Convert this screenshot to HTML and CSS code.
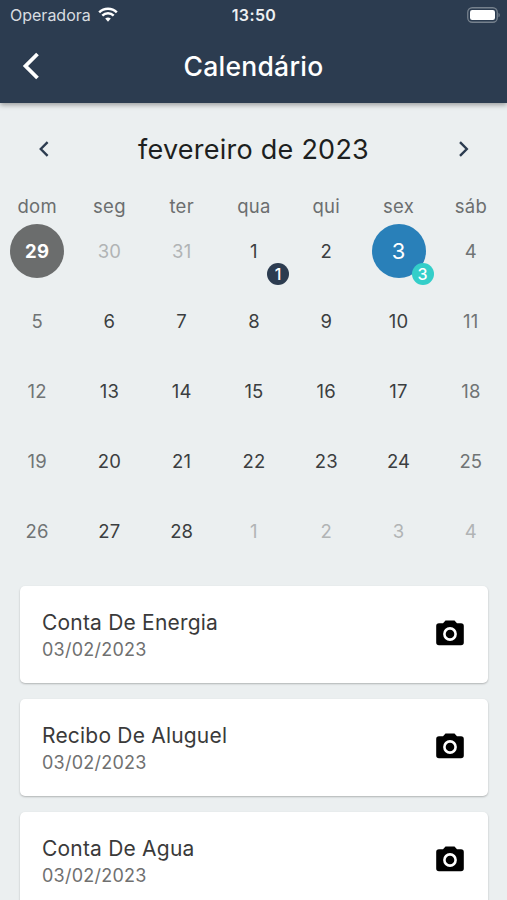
FILE: index.html
```
<!DOCTYPE html>
<html lang="pt-BR">
<head>
    <meta charset="UTF-8">
    <meta name="viewport" content="width=device-width, initial-scale=1.0">
    <title>Calendário</title>
    <link rel="stylesheet" href="styles.css">
</head>
<body>
    <header class="app-header">
        <div class="status-bar">
            <div class="carrier">
                <span>Operadora</span>
                <svg class="wifi" viewBox="0 0 20 15" width="20" height="15">
                    <path d="M1.2 5.4a12.6 12.6 0 0 1 17.6 0M4.3 8.6a8.2 8.2 0 0 1 11.4 0" fill="none" stroke="#fff" stroke-width="2.5"/>
                    <path d="M7.2 11.6a4.3 4.3 0 0 1 5.6 0L10 14.7z" fill="#fff"/>
                </svg>
            </div>
            <span class="clock">13:50</span>
            <svg class="battery" viewBox="0 0 33 16" width="33" height="16">
                <rect x="0.75" y="0.75" width="29.5" height="14.5" rx="4.5" fill="none" stroke="#76818d" stroke-width="1.3"/>
                <rect x="3" y="3" width="25" height="10" rx="2.2" fill="#fff"/>
                <path d="M31.5 5.7v4.6q1.3-.7 1.3-2.3t-1.3-2.3z" fill="#76818d"/>
            </svg>
        </div>
        <div class="title-bar">
            <button class="back">
                <svg viewBox="0 0 18 28" width="18" height="28">
                    <path d="M15.5 2L3.5 14l12 12" fill="none" stroke="#fff" stroke-width="3.8"/>
                </svg>
            </button>
            <h1>Calendário</h1>
        </div>
    </header>

    <main>
        <div class="month-bar">
            <button class="arrow">
                <svg viewBox="0 0 12 18" width="12" height="18">
                    <path d="M10.6 2.2L3.8 9l6.8 6.8" fill="none" stroke="#2c3c50" stroke-width="2.4"/>
                </svg>
            </button>
            <h2>fevereiro de 2023</h2>
            <button class="arrow">
                <svg viewBox="0 0 12 18" width="12" height="18">
                    <path d="M2 2.2L8.8 9 2 15.8" fill="none" stroke="#2c3c50" stroke-width="2.4"/>
                </svg>
            </button>
        </div>

        <div class="weekdays">
            <span>dom</span><span>seg</span><span>ter</span><span>qua</span><span>qui</span><span>sex</span><span>sáb</span>
        </div>

        <div class="days">
            <div class="day today"><span>29</span></div>
            <div class="day other"><span>30</span></div>
            <div class="day other"><span>31</span></div>
            <div class="day"><span>1</span><i class="badge">1</i></div>
            <div class="day"><span>2</span></div>
            <div class="day selected"><span>3</span><i class="badge">3</i></div>
            <div class="day weekend"><span>4</span></div>

            <div class="day weekend"><span>5</span></div>
            <div class="day"><span>6</span></div>
            <div class="day"><span>7</span></div>
            <div class="day"><span>8</span></div>
            <div class="day"><span>9</span></div>
            <div class="day"><span>10</span></div>
            <div class="day weekend"><span>11</span></div>

            <div class="day weekend"><span>12</span></div>
            <div class="day"><span>13</span></div>
            <div class="day"><span>14</span></div>
            <div class="day"><span>15</span></div>
            <div class="day"><span>16</span></div>
            <div class="day"><span>17</span></div>
            <div class="day weekend"><span>18</span></div>

            <div class="day weekend"><span>19</span></div>
            <div class="day"><span>20</span></div>
            <div class="day"><span>21</span></div>
            <div class="day"><span>22</span></div>
            <div class="day"><span>23</span></div>
            <div class="day"><span>24</span></div>
            <div class="day weekend"><span>25</span></div>

            <div class="day weekend"><span>26</span></div>
            <div class="day"><span>27</span></div>
            <div class="day"><span>28</span></div>
            <div class="day other"><span>1</span></div>
            <div class="day other"><span>2</span></div>
            <div class="day other"><span>3</span></div>
            <div class="day other"><span>4</span></div>
        </div>

        <svg width="0" height="0" class="icons">
            <symbol id="camera" viewBox="0 0 28 26">
                <path d="M9.5 0.5h9L21 3.2h4a2.8 2.8 0 0 1 2.8 2.8v16.5a2.8 2.8 0 0 1-2.8 2.8H3a2.8 2.8 0 0 1-2.8-2.8V6A2.8 2.8 0 0 1 3 3.2h4z" fill="#000"/>
                <circle cx="14" cy="14" r="5.6" fill="none" stroke="#fff" stroke-width="2.6"/>
            </symbol>
        </svg>

        <div class="events">
            <div class="card">
                <div>
                    <div class="name">Conta De Energia</div>
                    <div class="date">03/02/2023</div>
                </div>
                <svg width="28" height="26"><use href="#camera"/></svg>
            </div>
            <div class="card">
                <div>
                    <div class="name">Recibo De Aluguel</div>
                    <div class="date">03/02/2023</div>
                </div>
                <svg width="28" height="26"><use href="#camera"/></svg>
            </div>
            <div class="card">
                <div>
                    <div class="name">Conta De Agua</div>
                    <div class="date">03/02/2023</div>
                </div>
                <svg width="28" height="26"><use href="#camera"/></svg>
            </div>
        </div>
    </main>
</body>
</html>
```
FILE: styles.css
```
* {
    box-sizing: border-box;
}

body {
    margin: 0;
    height: 100vh;
    overflow: hidden;
    display: flex;
    flex-direction: column;
    background: #ebeff0;
    font-family: Inter, "Liberation Sans", sans-serif;
}

h1, h2 {
    margin: 0;
    font-weight: 500;
}

button {
    padding: 0;
    border: none;
    background: none;
    display: flex;
    cursor: pointer;
}

.app-header {
    height: 103px;
    flex-shrink: 0;
    background: #2c3c50;
    color: #fff;
    box-shadow: 0 2px 5px rgba(0, 0, 0, 0.35);
}

.status-bar {
    display: grid;
    grid-template-columns: 1fr auto 1fr;
    align-items: center;
    height: 29px;
    padding: 0 7px 0 10px;
    font-size: 16px;
}

.carrier {
    display: flex;
    align-items: center;
    gap: 7px;
    color: #d8dce0;
}

.clock {
    margin-right: 2px;
    font-weight: 600;
    letter-spacing: 0.4px;
    color: #eef0f2;
}

.battery {
    justify-self: end;
}

.title-bar {
    display: grid;
    grid-template-columns: 60px 1fr 60px;
    align-items: center;
    height: 73px;
}

.back {
    padding-left: 22px;
}

.title-bar h1 {
    font-size: 26.5px;
    letter-spacing: 0.25px;
    text-align: center;
}

.month-bar {
    display: flex;
    justify-content: space-between;
    align-items: center;
    height: 93px;
    padding: 0 37px;
}

.month-bar h2 {
    font-size: 27px;
    font-weight: 400;
    letter-spacing: 0.25px;
    color: #1d1f20;
}

.arrow {
    margin-bottom: 1px;
}

.weekdays, .days {
    display: grid;
    grid-template-columns: repeat(7, 1fr);
    padding-left: 1px;
    text-align: center;
}

.weekdays {
    height: 20px;
    line-height: 21px;
    font-size: 18.5px;
    letter-spacing: 0.3px;
    color: #6b6e6f;
}

.days {
    grid-auto-rows: 70px;
}

.day {
    position: relative;
    display: flex;
    justify-content: center;
    align-items: center;
    font-size: 18.5px;
    letter-spacing: 0.2px;
    color: #3b3e40;
}

.day > span {
    width: 54px;
    height: 54px;
    line-height: 54px;
    border-radius: 50%;
}

.weekend {
    color: #707475;
}

.other {
    color: #b1b4b5;
}

.today > span {
    background: #6b6d6d;
    color: #fff;
    font-weight: 700;
}

.selected > span {
    background: #2980b9;
    color: #fff;
    font-size: 22px;
}

/* number of bills on that day */
.badge {
    position: absolute;
    right: 1px;
    bottom: 1px;
    width: 22px;
    height: 22px;
    line-height: 22px;
    border-radius: 50%;
    background: #2c3c50;
    color: #fff;
    font-size: 16px;
    font-style: normal;
    font-weight: 500;
}

.selected .badge {
    background: #34cec9;
}

.icons {
    display: block;
}

.events {
    display: flex;
    flex-direction: column;
    gap: 16px;
    padding: 20px 19px 0 20px;
}

.card {
    display: flex;
    justify-content: space-between;
    align-items: center;
    height: 97px;
    padding: 2px 24px 0 22px;
    background: #fff;
    border-radius: 5px;
    box-shadow: 0 1px 2px rgba(0, 0, 0, 0.25);
}

.card svg {
    margin-bottom: 5px;
}

.name {
    font-size: 21px;
    line-height: 28px;
    letter-spacing: 0.2px;
    color: #3a3a3a;
}

.date {
    font-size: 18px;
    line-height: 26px;
    letter-spacing: 0.25px;
    color: #707070;
}
```
